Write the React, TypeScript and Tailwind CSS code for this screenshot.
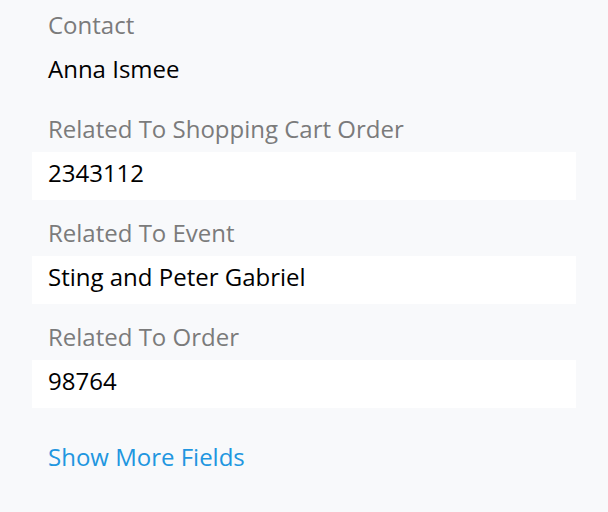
import React from "react";

const fields = [
  { label: "Related To Shopping Cart Order", value: "2343112" },
  { label: "Related To Event", value: "Sting and Peter Gabriel" },
  { label: "Related To Order", value: "98764" },
];

export default function App() {
  return (
    <div
      className="w-[608px] h-[512px] bg-[#f8f9fb] px-8 text-[24px] leading-[32px] overflow-hidden"
      style={{ fontFamily: '"Open Sans", sans-serif' }}
    >
      <div className="flex flex-col">
        <div className="h-12 flex items-center px-4 pt-[2px] text-[#7b7b7b]">Contact</div>
        <div className="h-12 flex items-center px-4 pb-[6px] text-black">Anna Ismee</div>
        {fields.map((f) => (
          <div key={f.label} className="mt-2 flex flex-col">
            <div className="h-12 flex items-center px-4 pt-[2px] text-[#7b7b7b]">{f.label}</div>
            <div className="h-12 flex items-center px-4 pb-[6px] bg-white text-black">{f.value}</div>
          </div>
        ))}
        <div className="mt-[25px] h-12 flex items-center px-4 text-[#2196e0]">Show More Fields</div>
      </div>
    </div>
  );
}
